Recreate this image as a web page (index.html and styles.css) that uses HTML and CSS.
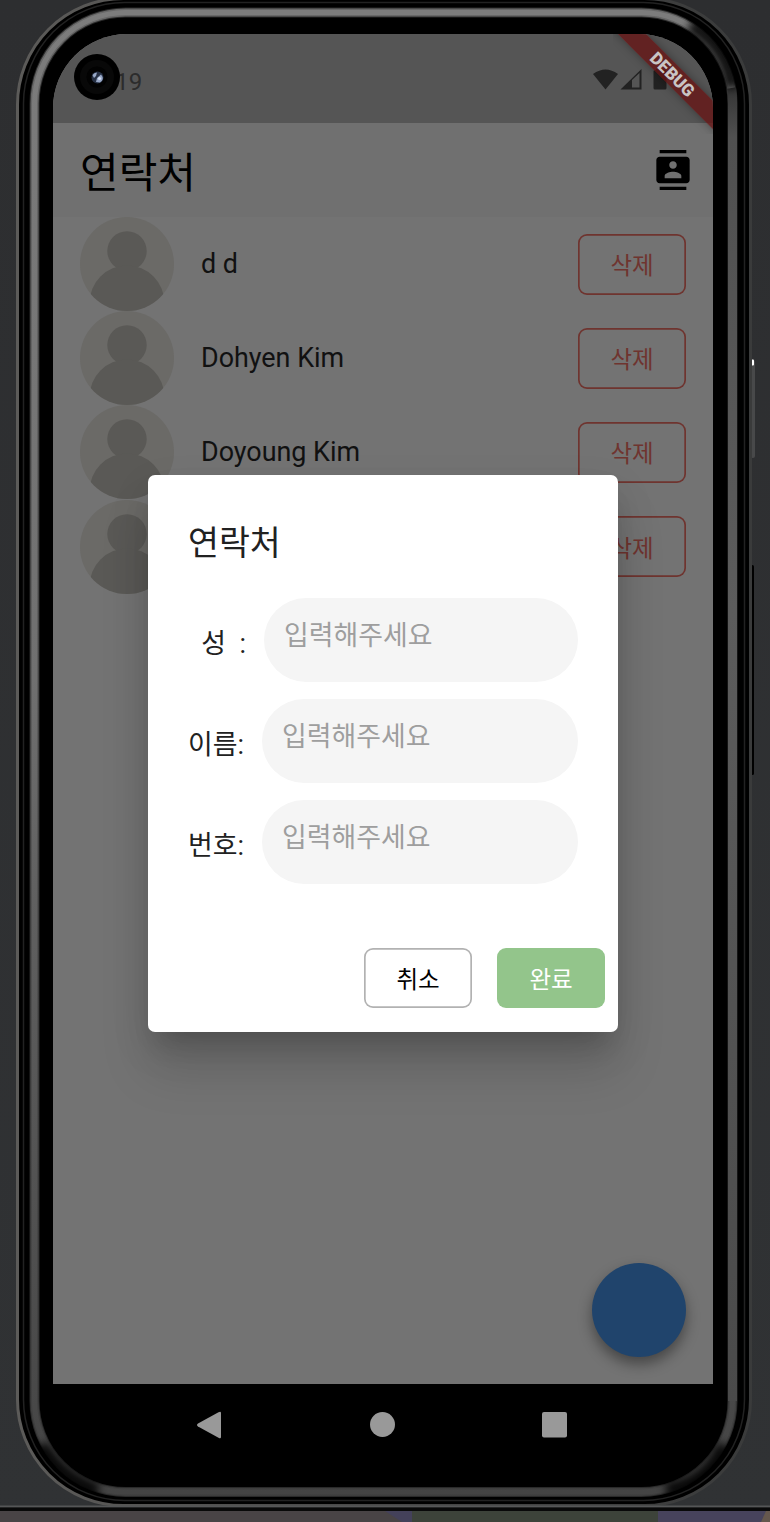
FILE: index.html
```html
<!DOCTYPE html>
<html lang="ko">
<head>
<meta charset="utf-8">
<title>연락처</title>
<link rel="stylesheet" href="styles.css">
</head>
<body>
<svg width="0" height="0" class="defs">
  <symbol id="avatar" viewBox="0 0 94 94">
    <clipPath id="disc"><circle cx="47" cy="47" r="47"/></clipPath>
    <circle cx="47" cy="47" r="47" fill="#6b6a67"/>
    <g clip-path="url(#disc)" fill="#5a5956"><circle cx="47" cy="34" r="19.700"/><circle cx="47" cy="86" r="37.500"/></g>
  </symbol>
</svg>
<div class="desk">
  <svg class="frame" viewBox="0 0 770 1522">
    <defs>
      <linearGradient id="band" x1="0" y1="0" x2="0" y2="1"><stop offset="0" stop-color="#7c7c7c"/><stop offset=".45" stop-color="#707070"/><stop offset=".6" stop-color="#606060"/><stop offset="1" stop-color="#444"/></linearGradient>
      <linearGradient id="bandR" gradientUnits="userSpaceOnUse" x1="0" y1="85" x2="0" y2="1401"><stop offset="0" stop-color="#333"/><stop offset=".04" stop-color="#505050"/><stop offset=".4" stop-color="#5c5c5c"/><stop offset="1" stop-color="#4a4a4a"/></linearGradient>
      <linearGradient id="edge" x1="0" y1="0" x2="1" y2="0"><stop offset="0" stop-color="#5c5b59"/><stop offset=".5" stop-color="#484848"/><stop offset="1" stop-color="#3a3b3b"/></linearGradient>
      <linearGradient id="desk" x1="0" y1="0" x2="0" y2="1"><stop offset="0" stop-color="#2d2e30"/><stop offset="1" stop-color="#303234"/></linearGradient>
      <filter id="soft" x="-20%" y="-20%" width="140%" height="140%"><feGaussianBlur stdDeviation="4"/></filter>
      <clipPath id="body"><rect x="27" y="6" width="713" height="1492" rx="98"/></clipPath>
    </defs>
    <rect width="770" height="1522" fill="url(#desk)"/>
    <rect x="750.500" y="360" width="4.500" height="98" rx="2" fill="#48494a"/>
    <rect x="751" y="359.500" width="3" height="6" rx="1" fill="#fff"/>
    <rect x="751" y="565" width="3" height="210" rx="1.500" fill="#000"/>
    <rect x="17.500" y="-1.500" width="733" height="1507" rx="106" fill="#000" stroke="url(#edge)" stroke-width="3"/>
    <rect x="23.500" y="2.500" width="721" height="1498" rx="101" fill="none" stroke="#222" stroke-width="1.500"/>
    <rect x="34.500" y="12.500" width="698" height="1479.500" rx="91" fill="none" stroke="#2a2a2a" stroke-width="10"/>
    <rect x="34.500" y="12.500" width="698" height="1479.500" rx="91" fill="none" stroke="url(#band)" stroke-width="8" opacity=".75"/>
    <rect x="34.500" y="12.500" width="698" height="1479.500" rx="91" fill="none" stroke="url(#band)" stroke-width="5"/>
    <path d="M731.500 88Q732.500 95 732.500 104V1401" fill="none" stroke="url(#bandR)" stroke-width="9"/>
    <g clip-path="url(#body)"><path d="M690 25Q728 47 732 88M41 1445Q60 1478 98 1491M666 1490Q708 1484 724 1445" stroke="#000" stroke-width="14" fill="none" filter="url(#soft)" opacity=".9"/></g>
    <rect x="0" y="1505.500" width="770" height="2" fill="#555657"/>
    <rect x="0" y="1507.500" width="770" height="4" fill="#090909"/>
    <rect x="0" y="1511" width="412" height="11" fill="#494446"/>
    <path d="M385 1511H412V1522H402Z" fill="#44415a"/>
    <path d="M412 1511H658V1522H412Z" fill="#3d433a"/>
    <path d="M658 1511H770V1522H658Z" fill="#47435c"/>
    <path d="M766 1511H770V1522H761Z" fill="#65574d"/>
  </svg>

  <div class="screen">
    <header class="status">
      <span class="time">3:19</span>
      <svg class="signals" viewBox="0 0 76 22"><path d="M0 5Q12.500-4 25 5L12.500 20.500Z"/><path d="M27.500 20.500L48.500 0V20.500Z"/><path d="M39 11L46.500 4V18.500H39Z" fill="#555"/><path d="M60.500 2.500Q60.500 1 62 1H63V0H70.500V1H72Q73.500 1 73.500 2.500V19Q73.500 20.500 72 20.500H62Q60.500 20.500 60.500 19Z"/></svg>
      <div class="camera"><svg viewBox="0 0 46 46"><circle cx="23" cy="23" r="23"/><circle cx="23" cy="23" r="17" fill="#080808"/><circle cx="23" cy="23" r="10.500" fill="#020202"/><circle cx="23.500" cy="23.500" r="6" fill="#263044"/><path d="M18.500 21Q20 18.500 23 18.500L22 22 20 24ZM23 24L27 20.500Q31 25 26 28.500L22 28Z" fill="#98a8c7"/><circle cx="25.500" cy="24.500" r="1.600" fill="#d4dff3"/></svg></div>
      <div class="debug"><span>DEBUG</span></div>
    </header>
    <div class="appbar">
      <h1>연락처</h1>
      <svg class="contacts" viewBox="0 0 24 24"><path d="M20 0H4v2h16V0zM4 24h16v-2H4v2zM20 4H4c-1.100 0-2 .9-2 2v12c0 1.100.9 2 2 2h16c1.100 0 2-.9 2-2V6c0-1.100-.9-2-2-2zm-8 2.750c1.240 0 2.250 1.010 2.250 2.250s-1.010 2.250-2.250 2.250S9.750 10.240 9.750 9 10.760 6.750 12 6.750zM17 17H7v-1.500c0-1.670 3.330-2.500 5-2.500s5 .83 5 2.500V17z"/></svg>
    </div>
    <ul class="list">
      <li><svg class="avatar"><use href="#avatar"/></svg><span class="name">d d</span><button class="btn delete">삭제</button></li>
      <li><svg class="avatar"><use href="#avatar"/></svg><span class="name">Dohyen Kim</span><button class="btn delete">삭제</button></li>
      <li><svg class="avatar"><use href="#avatar"/></svg><span class="name">Doyoung Kim</span><button class="btn delete">삭제</button></li>
      <li><svg class="avatar"><use href="#avatar"/></svg><span class="name"></span><button class="btn delete">삭제</button></li>
    </ul>
    <div class="fab"></div>
    <section class="dialog">
      <h2>연락처</h2>
      <div class="row"><label class="wide">&nbsp; 성 &nbsp;:</label><div class="field">입력해주세요</div></div>
      <div class="row"><label>이름:</label><div class="field">입력해주세요</div></div>
      <div class="row"><label>번호:</label><div class="field">입력해주세요</div></div>
      <div class="actions"><button class="btn cancel">취소</button><button class="btn done">완료</button></div>
    </section>
  </div>
  <nav class="nav">
    <svg viewBox="0 0 26 28"><path d="M2 12.500L22.500 1.300Q25 0 25 2V26Q25 28 22.500 26.700L2 15.500Q0 14 2 12.500Z"/></svg>
    <svg viewBox="0 0 26 28"><circle cx="13.500" cy="13.500" r="12.500"/></svg>
    <svg viewBox="0 0 26 28"><rect x="0" y="1" width="25" height="25.500" rx="2"/></svg>
  </nav>
</div>
</body>
</html>
```
FILE: styles.css
```css
* { box-sizing: border-box; }
body { margin: 0; background: #2d2e30; font-family: Roboto, "Noto Sans CJK KR", sans-serif; overflow: hidden; }
.defs { position: absolute; }
h1, h2, ul { margin: 0; padding: 0; font-weight: 400; }
.desk { display: grid; grid-template: 34px 1350px 138px / 53px 660px 57px; width: 770px; height: 1522px; }
.frame { grid-area: 1 / 1 / 4 / 4; width: 770px; height: 1522px; }
.screen { grid-area: 2 / 2; position: relative; display: flex; flex-direction: column; background: #737373; border-radius: 74px 74px 0 0; overflow: hidden; }
.status { position: relative; flex: 0 0 89px; background: #555; display: flex; justify-content: space-between; padding: 35px 46px 0 43px; }
.time { font-size: 24px; line-height: 26px; color: #2c2c2c; }
.signals { width: 76px; height: 22px; margin-right: -2px; fill: #222; }
.camera { position: absolute; left: 21px; top: 20px; width: 46px; height: 46px; }
.camera svg { display: block; width: 46px; height: 46px; }
.debug { position: absolute; top: 0; right: 0; width: 100px; height: 100px; overflow: hidden; z-index: 2; }
.debug span { position: absolute; left: -17px; top: 29px; width: 150px; height: 20px; line-height: 20px; padding-left: 4px; text-align: center; transform: rotate(45deg); background: rgba(102, 18, 18, .76); box-shadow: 0 0 10px rgba(0, 0, 0, .35); color: #c9c5c5; font-size: 17.200px; font-weight: 900; }
.appbar { flex: 0 0 94px; display: flex; align-items: center; justify-content: space-between; padding: 0 20.500px 0 27px; background: #707070; }
.appbar h1 { font-size: 42px; line-height: 60px; padding-top: 8px; color: #000; }
.contacts { width: 40px; height: 40px; }
.list { list-style: none; }
.list li { display: flex; align-items: center; height: 94.200px; padding: 0 27px; }
.avatar { width: 94px; height: 94px; }
.name { flex: 1; padding-left: 27px; font-size: 26.900px; color: #111; }
.btn { width: 108px; height: 61px; border: 0 solid; border-radius: 9px; padding: 4px 0 0; background: none; font: 23.500px/34px Roboto, "Noto Sans CJK KR", sans-serif; }
.delete { color: #6f342f; box-shadow: inset 0 0 0 1.700px #6f342f; }
.fab { position: absolute; left: 539px; top: 1229px; width: 94px; height: 94px; border-radius: 50%; background: #20446c; box-shadow: 0 7px 14px rgba(0, 0, 0, .4); }
.dialog { position: absolute; left: 95px; top: 441px; width: 470px; height: 557px; border-radius: 7px; background: #fff; padding: 43px 40px 0; color: #212121; box-shadow: 0 18px 25px -12px rgba(0, 0, 0, .18), 0 38px 50px 0 rgba(0, 0, 0, .13), 0 15px 40px 2px rgba(0, 0, 0, .08); }
.dialog h2 { font-size: 33.600px; line-height: 52px; margin-bottom: 28px; }
.row { display: flex; align-items: center; height: 84px; margin-bottom: 17px; font-size: 26.900px; }
.row label { flex: 0 0 74px; padding-top: 3px; white-space: pre; }
.row .wide { flex-basis: 76px; }
.field { flex: 1; height: 84px; border-radius: 42px; background: #f5f5f5; color: #9e9e9e; padding: 18px 20px; line-height: 41px; }
.actions { display: flex; justify-content: flex-end; gap: 25px; margin: 64px -27px 0 0; }
.actions .btn { height: 60px; padding-top: 3px; }
.cancel { color: #000; box-shadow: inset 0 0 0 1.700px #b2b2b2; }
.done { color: #fff; background: #93c58b; }
.nav { grid-area: 3 / 2; display: flex; gap: 147px; padding: 27px 0 0 143px; }
.nav svg { width: 26px; height: 28px; fill: #999; }
```
